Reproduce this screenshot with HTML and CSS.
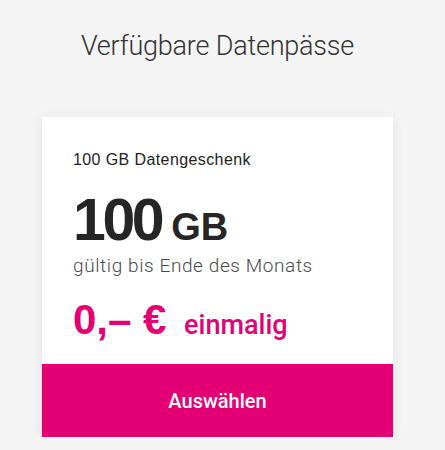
FILE: index.html
```html
<!DOCTYPE html>
<html lang="de">
<head>
    <meta charset="UTF-8">
    <meta name="viewport" content="width=device-width, initial-scale=1.0">
    <title>Datenpässe</title>
    <link rel="stylesheet" href="styles.css">
</head>
<body>
    <div class="page">
        <h1 class="title">Verfügbare Datenpässe</h1>
        <div class="card">
            <div class="card-body">
                <div class="pass-name">100 GB Datengeschenk</div>
                <div class="volume">100<span class="unit">GB</span></div>
                <div class="valid">gültig bis Ende des Monats</div>
                <div class="price">0,– € <span class="once">einmalig</span></div>
            </div>
            <button class="select">Auswählen</button>
        </div>
    </div>
</body>
</html>
```

FILE: styles.css
```css
:root{
    --magenta: #e20074;
    --text: #262626;
}
*{
    box-sizing: border-box;
}
body{
    margin: 0;
    background-color: #f4f4f4;
    font-family: "Roboto", "Liberation Sans", sans-serif;
    color: var(--text);
}
.page{
    display: flex;
    flex-direction: column;
    align-items: center;
    padding: 30px 10px 0 0;
}
.title{
    font-size: 27px;
    font-weight: 300;
    letter-spacing: -0.2px;
    color: #333;
    margin: 0 0 55px 0;
    line-height: 32px;
}
.card{
    width: 351px;
    background-color: #fff;
    box-shadow: 0 1px 12px rgba(0, 0, 0, 0.07);
    display: flex;
    flex-direction: column;
}
.card-body{
    padding: 33px 31px 20px 31px;
}
.pass-name{
    font-family: "Liberation Sans", Arial, sans-serif;
    font-size: 16px;
    letter-spacing: 0.4px;
    line-height: 20px;
    color: #222;
}
.volume{
    font-family: "Liberation Sans", Arial, sans-serif;
    font-size: 59px;
    font-weight: 700;
    letter-spacing: -3.4px;
    line-height: 60px;
    margin-top: 20px;
}
.unit{
    font-size: 38px;
    letter-spacing: 0;
    line-height: 1;
    margin-left: 10px;
}
.valid{
    font-size: 19px;
    font-weight: 300;
    letter-spacing: 0.6px;
    color: #4a4a4a;
    line-height: 24px;
    margin-top: 4px;
}
.price{
    font-family: "Liberation Sans", Arial, sans-serif;
    font-size: 42px;
    font-weight: 700;
    line-height: 48px;
    color: var(--magenta);
    margin-top: 18px;
}
.once{
    font-family: "Roboto", sans-serif;
    font-size: 27px;
    font-weight: 500;
    line-height: 1;
    margin-left: 6px;
}
.select{
    height: 73px;
    border: none;
    background-color: var(--magenta);
    color: #fff;
    font-family: inherit;
    font-size: 20px;
    font-weight: 500;
    cursor: pointer;
}
```
